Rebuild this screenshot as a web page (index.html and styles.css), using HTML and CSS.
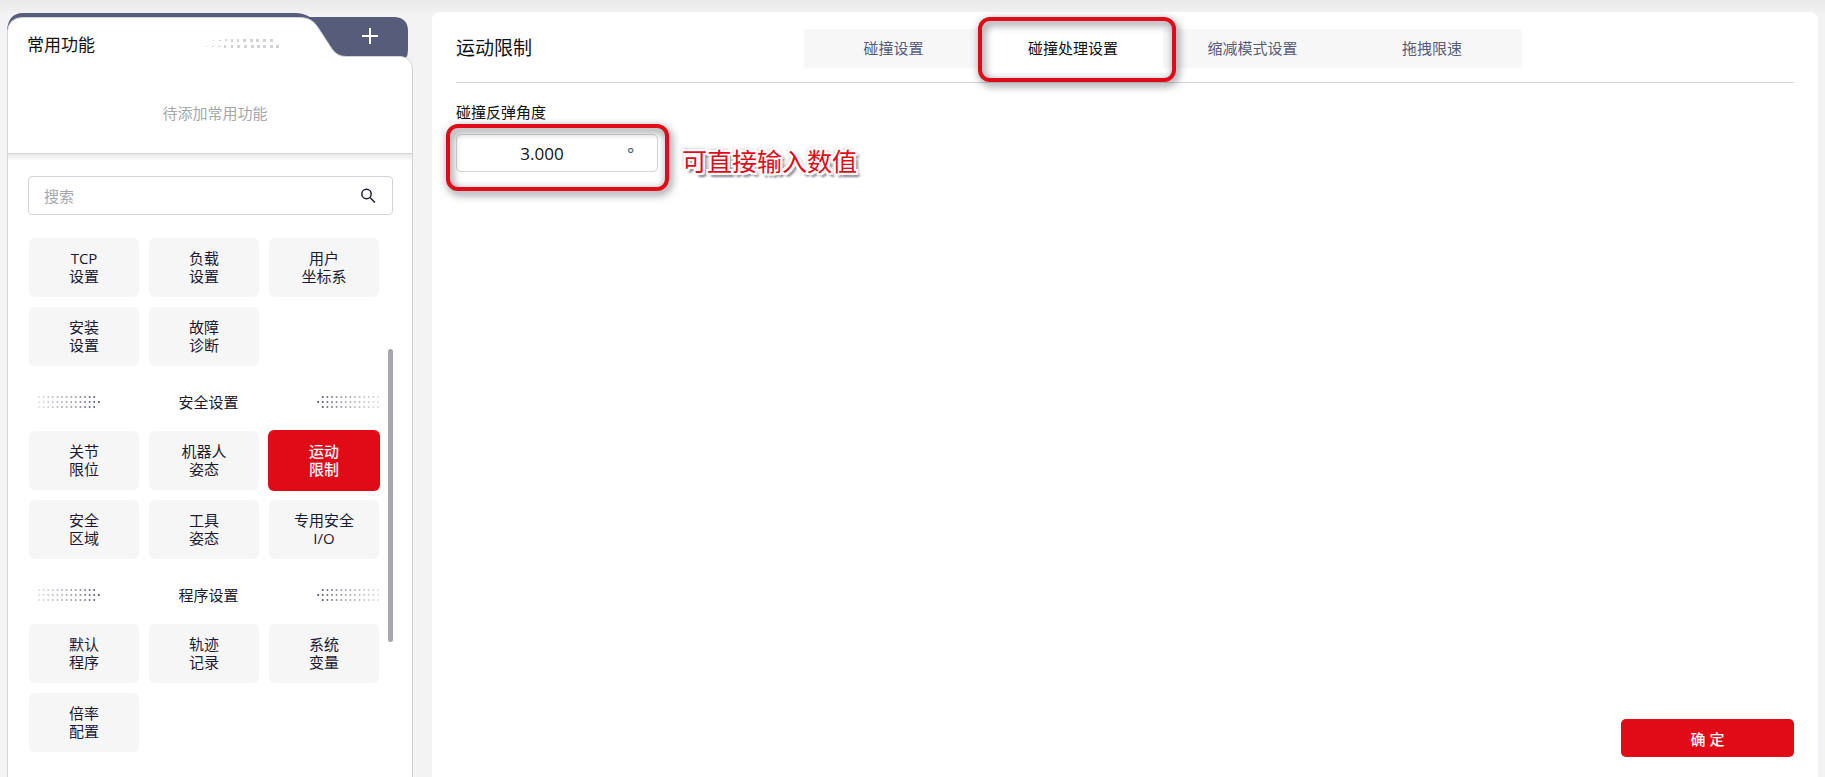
FILE: index.html
```
<!DOCTYPE html>
<html lang="zh-CN">
<head>
    <meta charset="UTF-8">
    <meta name="viewport" content="width=device-width, initial-scale=1.0">
    <title>运动限制</title>
    <link rel="stylesheet" href="styles.css">
</head>
<body>
    <!-- shared dot decoration for the group titles -->
    <svg class="defs" width="0" height="0" aria-hidden="true">
        <defs>
            <linearGradient id="fade" gradientUnits="userSpaceOnUse" x1="0" y1="0" x2="63" y2="0">
                <stop offset="0" stop-color="#585c7b" stop-opacity="0.2"/>
                <stop offset="0.6" stop-color="#585c7b" stop-opacity="0.6"/>
                <stop offset="1" stop-color="#3c3f5e"/>
            </linearGradient>
            <symbol id="dots" viewBox="0 0 63 14">
                <g stroke="url(#fade)" stroke-width="2" stroke-linecap="round" stroke-dasharray="0 4.6">
                    <path d="M1 2H59M1 7H63M1 12H59"/>
                </g>
            </symbol>
        </defs>
    </svg>

    <div class="container">
        <aside class="sidebar">
            <section class="favorites">
                <svg class="folder" width="408" height="70" viewBox="0 0 408 70" aria-hidden="true">
                    <path fill="#585c7b" d="M0 18Q1 0 16 0H288Q296 0 303 4H388Q401 5 401 18V37Q401 42 399 45H0Z"/>
                    <path fill="#fff" stroke="#d2d3d6" d="M.5 70V18Q2 4.500 16 4.500H292C302 4.500 307 8 312 16L325 36Q330 43.500 339 43.500H394Q405.500 45 405.500 57V70"/>
                </svg>
                <div class="favorites-head">
                    <h2>常用功能</h2>
                    <svg width="78" height="12" viewBox="0 0 78 12" fill="#d2d3d6" aria-hidden="true">
                        <path d="M8 3h1v1H8zM14 3h2v1h-2zM20 2h2v2h-2zM26 2h2v3h-2zM32 2h2v3h-2zM38 2h3v3h-3zM45 2h3v3h-3zM51 2h3v3h-3zM58 2h3v3h-3zM65 2h3v3h-3zM1 9h1v1H1zM7 9h2v1H7zM13 9h2v1h-2zM19 8h2v3h-2zM26 8h2v3h-2zM32 8h3v3h-3zM39 8h3v3h-3zM46 8h3v3h-3zM52 8h3v3h-3zM58 8h3v3h-3zM65 8h3v3h-3zM71 8h3v3h-3z"/>
                    </svg>
                    <button class="add" type="button" aria-label="添加">
                        <svg width="16" height="16" viewBox="0 0 16 16" stroke="#fff" stroke-width="2"><path d="M8 0V16M0 8H16"/></svg>
                    </button>
                </div>
                <p>待添加常用功能</p>
            </section>

            <section class="functions">
                <div class="search">
                    <input type="text" placeholder="搜索" aria-label="搜索">
                    <svg width="16" height="16" viewBox="0 0 16 16" fill="none" stroke="#1a1a33" stroke-width="1.5" aria-hidden="true">
                        <circle cx="6.500" cy="6" r="4.700"/>
                        <path d="M10 9.500L15 14.500"/>
                    </svg>
                </div>
                <div class="scroll">
                    <nav class="groups">
                        <div class="tiles">
                            <button type="button">TCP<br>设置</button>
                            <button type="button">负载<br>设置</button>
                            <button type="button">用户<br>坐标系</button>
                            <button type="button">安装<br>设置</button>
                            <button type="button">故障<br>诊断</button>
                        </div>
                        <div class="group-title">
                            <svg width="63" height="14"><use href="#dots"/></svg>
                            <h3>安全设置</h3>
                            <svg class="flip" width="63" height="14"><use href="#dots"/></svg>
                        </div>
                        <div class="tiles">
                            <button type="button">关节<br>限位</button>
                            <button type="button">机器人<br>姿态</button>
                            <button class="active" type="button">运动<br>限制</button>
                            <button type="button">安全<br>区域</button>
                            <button type="button">工具<br>姿态</button>
                            <button type="button">专用安全<br>I/O</button>
                        </div>
                        <div class="group-title">
                            <svg width="63" height="14"><use href="#dots"/></svg>
                            <h3>程序设置</h3>
                            <svg class="flip" width="63" height="14"><use href="#dots"/></svg>
                        </div>
                        <div class="tiles">
                            <button type="button">默认<br>程序</button>
                            <button type="button">轨迹<br>记录</button>
                            <button type="button">系统<br>变量</button>
                            <button type="button">倍率<br>配置</button>
                        </div>
                    </nav>
                    <div class="scroll-thumb"></div>
                </div>
            </section>
        </aside>

        <main class="content">
            <header class="content-head">
                <h1>运动限制</h1>
                <div class="tabs" role="tablist">
                    <button type="button" role="tab">碰撞设置</button>
                    <button class="selected mark" type="button" role="tab" aria-selected="true">碰撞处理设置</button>
                    <button type="button" role="tab">缩减模式设置</button>
                    <button type="button" role="tab">拖拽限速</button>
                </div>
            </header>
            <div class="field">
                <label for="angle">碰撞反弹角度</label>
                <div class="field-row">
                    <div class="number mark">
                        <input id="angle" type="text" value="3.000">
                        <span class="unit">°</span>
                    </div>
                    <span class="note">可直接输入数值</span>
                </div>
            </div>
            <button class="confirm" type="button">确 定</button>
        </main>
    </div>
</body>
</html>
```
FILE: styles.css
```
* {
    box-sizing: border-box;
}
body {
    font-family: "Open Sans", "Noto Sans CJK SC", sans-serif;
    font-size: 15px;
    margin: 0;
    background: linear-gradient(#e9e9ea, #f3f3f4 16px);
    color: #1a1a33;
}
h1, h2, h3, p {
    margin: 0;
    font-weight: 400;
}
button, input {
    font: inherit;
    color: inherit;
    border: 0;
    padding: 0;
    background: none;
}
button {
    cursor: pointer;
}
.defs {
    position: absolute;
}
.container {
    display: flex;
    gap: 19px;
    min-height: 100vh;
    padding: 12px 7px 0;
}

/* left side */
.sidebar {
    display: flex;
    flex-direction: column;
    flex: none;
    width: 406px;
    padding-top: 1px;
}
.favorites {
    position: relative;
    height: 140px;
}
.favorites::before {
    content: "";
    position: absolute;
    inset: 60px 0 0;
    background-color: #fff;
    border: solid #d2d3d6;
    border-width: 0 1px;
}
.folder {
    position: absolute;
    top: 0;
    left: 0;
}
.favorites-head {
    position: relative;
    display: flex;
    align-items: center;
    height: 60px;
    padding-left: 20px;
}
.favorites-head h2 {
    width: 178px;
    font-size: 17px;
    color: #111;
}
.add {
    display: flex;
    align-self: flex-start;
    align-items: center;
    justify-content: center;
    width: 78px;
    height: 38px;
    margin: 4px 4px 0 auto;
}
.favorites p {
    position: relative;
    padding: 28px 0 0 10px;
    line-height: 24px;
    text-align: center;
    color: #a5a7ac;
}
.functions {
    flex: 1;
    padding: 22px 19px 0 20px;
    background: linear-gradient(#e8e8e9, #fff 7px);
    border: 1px solid #d2d3d6;
    border-bottom: 0;
}
.search {
    display: flex;
    align-items: center;
    height: 39px;
    padding: 0 16px 0 15px;
    border: 1px solid #d2d3d6;
    border-radius: 4px;
}
.search input {
    flex: 1;
    min-width: 0;
}
.search input::placeholder {
    color: #a5a7ac;
    opacity: 1;
}
.scroll {
    display: flex;
    gap: 9px;
    padding-top: 23px;
}
.groups {
    flex: 1;
    padding-left: 1px;
}
.tiles {
    display: grid;
    grid-template-columns: repeat(3, 1fr);
    grid-auto-rows: 59px;
    gap: 10px;
}
.tiles button {
    padding-bottom: 2px;
    line-height: 18px;
    background-color: #f6f6f7;
    border-radius: 6px;
}
.tiles .active {
    margin: -1px;
    color: #fff;
    background-color: #e10a17;
    font-weight: 500;
}
.group-title {
    display: flex;
    align-items: center;
    justify-content: space-between;
    height: 65px;
    padding: 6px 0 0 9px;
}
.group-title h3 {
    font-size: 15px;
}
.flip {
    transform: scaleX(-1);
}
.scroll-thumb {
    flex: none;
    width: 5px;
    height: 293px;
    margin-top: 111px;
    border-radius: 3px;
    background-color: #a5a7ac;
}

/* right side */
.content {
    display: flex;
    flex-direction: column;
    flex: 1;
    padding: 0 24px 20px;
    background-color: #fff;
    border-radius: 8px 8px 0 0;
}
.content-head {
    display: flex;
    align-items: center;
    height: 71px;
    padding-bottom: 10px;
    padding-top: 12px;
    border-bottom: 1px solid #d2d3d6;
}
.content-head h1 {
    width: 26%;
    padding-bottom: 2px;
    font-size: 19px;
    color: #111;
}
.tabs {
    display: grid;
    grid-template-columns: repeat(4, 1fr);
    width: 718px;
    height: 39px;
    background-color: #f7f7f8;
    border-radius: 4px;
}
.tabs button {
    padding-bottom: 2px;
    color: #585c7b;
}
.tabs .selected {
    color: #111;
    background-color: #fff;
}

/* red frame around a marked control */
.mark {
    position: relative;
}
.mark::after {
    content: "";
    position: absolute;
    inset: -12px -13px -14px -5px;
    border: 4px solid #e10a17;
    border-radius: 12px;
    filter: drop-shadow(2px 3px 4px #5d5f68);
    pointer-events: none;
}
.number.mark::after {
    inset: -11px -12px -20px -11px;
}
.field {
    padding-top: 17px;
}
.field label {
    display: block;
    line-height: 24px;
    color: #111;
}
.field-row {
    display: flex;
    align-items: flex-start;
    gap: 24px;
    padding-top: 10px;
}
.number {
    display: flex;
    align-items: center;
    width: 202px;
    height: 38px;
    border: 1px solid #d2d3d6;
    border-radius: 5px;
    color: #111;
}
.number input {
    width: 170px;
    font-size: 17px;
    text-align: center;
}
.unit {
    font-size: 17px;
    color: #585c7b;
}
.note {
    padding-top: 11px;
    font-family: "Liberation Serif", "Noto Sans CJK SC", serif;
    font-size: 25px;
    line-height: 36px;
    color: #e10a17;
    text-shadow: 2px 0 #fff, -2px 0 #fff, 0 2px #fff, 0 -2px #fff, 2px 2px #fff, -2px -2px #fff, 2px -2px #fff, -2px 2px #fff, 3px 4px 2px #8a8c98, 4px 3px 3px #8a8c98, 0 0 5px #a5a7ac, -2px -2px 3px #c2c3c8;
}
.confirm {
    align-self: flex-end;
    width: 173px;
    height: 38px;
    margin-top: auto;
    color: #fff;
    font-weight: 500;
    background-color: #e10a17;
    border-radius: 5px;
}
```
